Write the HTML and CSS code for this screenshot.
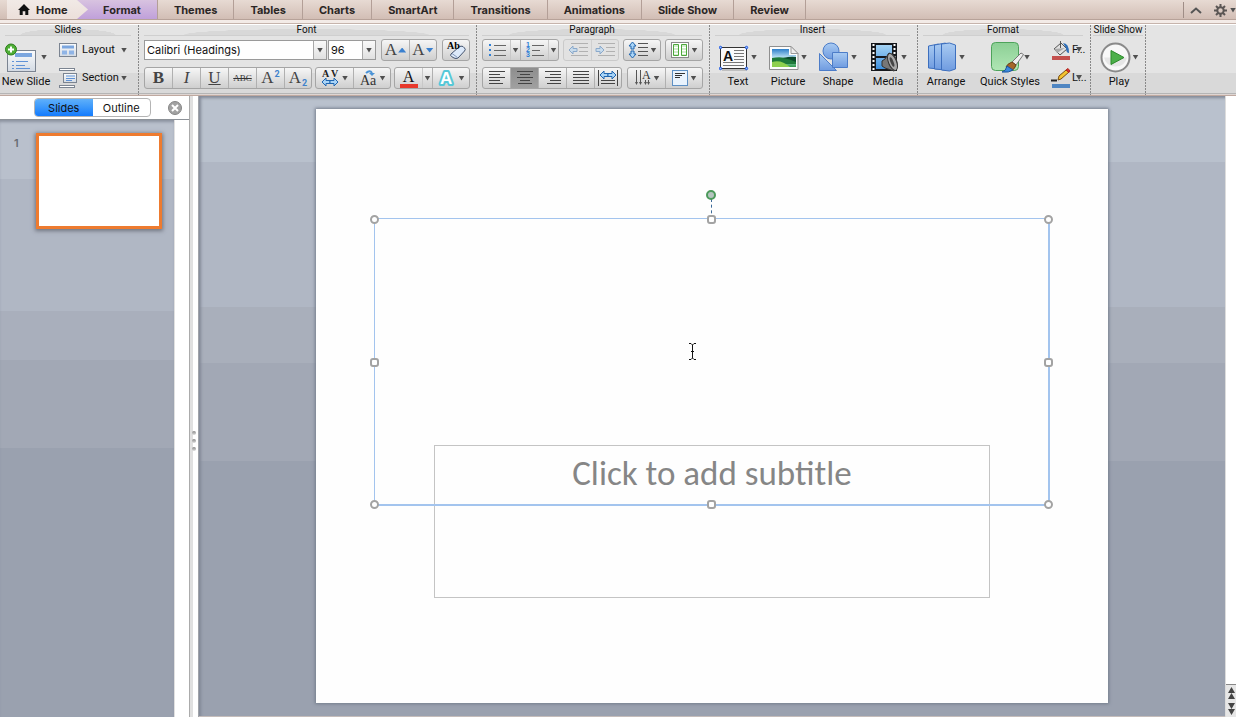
FILE: index.html
```html
<!DOCTYPE html>
<html lang="en">
<head>
<meta charset="utf-8">
<title>Presentation</title>
<link rel="stylesheet" href="styles.css">
</head>
<body>
<svg class="defs" aria-hidden="true">
  <defs>
    <linearGradient id="blue" x1="0" y1="0" x2="0" y2="1"><stop offset="0" stop-color="#a9cbf2"/><stop offset="1" stop-color="#6f9be0"/></linearGradient>
    <linearGradient id="green" x1="0" y1="0" x2="0" y2="1"><stop offset="0" stop-color="#8ccf95"/><stop offset="1" stop-color="#b0e6b4"/></linearGradient>
    <linearGradient id="card" x1="0" y1="0" x2="0" y2="1"><stop offset="0" stop-color="#fbfcfd"/><stop offset="1" stop-color="#d3dae3"/></linearGradient>
    <linearGradient id="sky" x1="0" y1="0" x2="0" y2="1"><stop offset="0" stop-color="#2e7fc9"/><stop offset=".5" stop-color="#c5e8f7"/><stop offset="1" stop-color="#2f9a4a"/></linearGradient>
    <linearGradient id="film" x1="0" y1="0" x2="0" y2="1"><stop offset="0" stop-color="#a5d4f5"/><stop offset="1" stop-color="#3d8fdd"/></linearGradient>
    <g id="arrow-l"><path d="M0 4 4 0v2.500h4v3H4V8z" fill="#a9d4f7" stroke="#2166b0"/></g>
    <g id="arrow-r"><path d="M8 4 4 0v2.500H0v3h4V8z" fill="#a9d4f7" stroke="#2166b0"/></g>
  </defs>
</svg>

<nav class="tabs" aria-label="Ribbon tabs">
  <button class="tab home"><svg width="12" height="11" viewBox="0 0 12 11"><path d="M6 0 12 6h-1.700v5H7.300V7.300H4.700V11H1.700V6H0z" fill="#111"/></svg><span>Home</span></button>
  <button class="tab format">Format</button>
  <button class="tab">Themes</button>
  <button class="tab">Tables</button>
  <button class="tab">Charts</button>
  <button class="tab">SmartArt</button>
  <button class="tab">Transitions</button>
  <button class="tab">Animations</button>
  <button class="tab">Slide Show</button>
  <button class="tab">Review</button>
  <div class="tab-tools">
    <button aria-label="Collapse ribbon"><svg width="12" height="7" viewBox="0 0 12 7"><path d="M1 6 6 1.500 11 6" fill="none" stroke="#555" stroke-width="2"/></svg></button>
    <button class="gear" aria-label="Ribbon settings"><svg width="13" height="13" viewBox="0 0 13 13"><g stroke="#5b5654" fill="none"><circle cx="6.500" cy="6.500" r="3.200" stroke-width="2"/><path d="M6.500 0v3M6.500 10v3M0 6.500h3M10 6.500h3M2 2l2 2M9 9l2 2M11 2 9 4M4 9l-2 2" stroke-width="2"/></g></svg><i class="caret"></i></button>
  </div>
</nav>

<header class="ribbon">
  <section class="group g-slides">
    <h2>Slides</h2>
    <div class="tools">
      <button class="big new">
        <span class="pic"><svg width="32" height="31" viewBox="2 0 32 31"><rect x="4.500" y="8.500" width="28" height="21" fill="url(#card)" stroke="#7b8491"/><path d="M12 13h17" stroke="#7ba6df" stroke-width="4"/><path d="M9 19.500h2M9 23.500h2M9 26.500h2M13 19.500h12M13 23.500h9M13 26.500h14" stroke="#5f92d6"/><circle cx="8" cy="7.500" r="5.500" fill="#4fae36" stroke="#2c7d1c"/><path d="M8 4.500v6M5 7.500h6" stroke="#fff" stroke-width="2"/></svg><i class="caret"></i></span>
        <span>New Slide</span>
      </button>
      <div class="stack">
        <button class="mini"><svg width="18" height="16" viewBox="0 0 18 16"><rect x=".5" y="1.500" width="17" height="13" fill="url(#card)" stroke="#7b8491"/><path d="M3 5h12" stroke="#7ba6df" stroke-width="3"/><path d="M3 10.500h5M10 10.500h5" stroke="#8fb4e6" stroke-width="4"/></svg><span>Layout</span><i class="caret"></i></button>
        <button class="mini"><svg width="18" height="20" viewBox="0 0 18 20"><rect x=".5" y=".5" width="15" height="2" fill="#fff" stroke="#7b8491"/><rect x=".5" y="17.500" width="15" height="2" fill="#fff" stroke="#7b8491"/><rect x="4.500" y="5.500" width="13" height="9" fill="url(#card)" stroke="#7b8491"/><path d="M7 8h9M7 10.500h9M7 12.500h6" stroke="#5f92d6"/></svg><span>Section</span><i class="caret"></i></button>
      </div>
    </div>
  </section>

  <section class="group g-font">
    <h2>Font</h2>
    <div class="rows">
      <div class="row">
        <div class="combos">
          <div class="combo family"><select aria-label="Font family"><option>Calibri (Headings)</option></select><i class="drop"><i class="caret"></i></i></div>
          <div class="combo size"><select aria-label="Font size"><option>96</option></select><i class="drop"><i class="caret"></i></i></div>
        </div>
        <div class="seg">
          <button aria-label="Grow font"><span class="serif">A</span><i class="tri up"></i></button>
          <button aria-label="Shrink font"><span class="serif">A</span><i class="tri down"></i></button>
        </div>
        <div class="seg">
          <button aria-label="Clear formatting"><svg width="22" height="20" viewBox="0 0 22 20"><path d="m6 14 8-7q2-1.500 4-.5l1.500 1.500q1.500 1.500 0 3L13 18q-2 1-4 0l-2.500-1.500q-1.500-1-.5-2.500z" fill="#dce9fa" stroke="#43536e"/><path d="m7 13.500 5.500 4" stroke="#7f96ba"/><text x="2" y="9" class="t-ab">Ab</text></svg></button>
        </div>
      </div>
      <div class="row">
        <div class="seg">
          <button aria-label="Bold"><b class="serif">B</b></button>
          <button aria-label="Italic"><em class="serif">I</em></button>
          <button aria-label="Underline"><u class="serif">U</u></button>
          <button aria-label="Strikethrough"><s>ABC</s></button>
          <button aria-label="Superscript"><span class="serif">A</span><sup>2</sup></button>
          <button aria-label="Subscript"><span class="serif">A</span><sub>2</sub></button>
        </div>
        <div class="seg">
          <button class="wide" aria-label="Character spacing"><svg width="18" height="18" viewBox="0 0 18 18"><text x="1" y="8" class="t-av">A</text><text x="10" y="8" class="t-av">V</text><use href="#arrow-l" x="1" y="9"/><use href="#arrow-r" x="9" y="9"/></svg><i class="caret"></i></button>
          <button class="wide" aria-label="Change case"><svg width="18" height="18" viewBox="0 0 18 18"><text x="1" y="16" class="t-aa">Aa</text><path d="M7 4q4-3.500 6 0" fill="none" stroke="#4b93d6" stroke-width="2"/><path d="M10 4h6l-3 3z" fill="#4b93d6"/></svg><i class="caret"></i></button>
        </div>
        <div class="seg">
          <button class="ink" aria-label="Font color"><span>A</span><i class="bar"></i></button>
          <button class="slim" aria-label="Font color options"><i class="caret"></i></button>
          <button class="wide" aria-label="Text effects"><svg width="18" height="18" viewBox="0 0 18 18"><text x="2" y="15" class="t-fx">A</text></svg><i class="caret"></i></button>
        </div>
      </div>
    </div>
  </section>

  <section class="group g-para">
    <h2>Paragraph</h2>
    <div class="rows">
      <div class="row">
        <div class="seg">
          <button aria-label="Bulleted list"><svg width="18" height="16" viewBox="0 0 18 16"><path d="M1 3h2M1 8h2M1 13h2" stroke="#2f7fd6" stroke-width="2"/><path d="M6 3.500h12M6 8.500h12M6 13.500h12" stroke="#666"/></svg></button>
          <button class="slim" aria-label="Bullet options"><i class="caret"></i></button>
          <button aria-label="Numbered list"><svg width="18" height="16" viewBox="0 0 18 16"><text x="0" y="5" class="t-n">1</text><text x="0" y="10" class="t-n">2</text><text x="0" y="15" class="t-n">3</text><path d="M6 3.500h12M6 8.500h8M6 13.500h12" stroke="#666"/></svg></button>
          <button class="slim" aria-label="Numbering options"><i class="caret"></i></button>
        </div>
        <div class="seg off">
          <button disabled aria-label="Decrease indent"><svg width="20" height="14" viewBox="0 0 20 14"><path d="M3 .5h17M11 4.500h9M11 8.500h9M3 12.500h17" stroke="#777"/><use href="#arrow-l" x="1" y="3"/></svg></button>
          <button disabled aria-label="Increase indent"><svg width="20" height="14" viewBox="0 0 20 14"><path d="M3 .5h17M11 4.500h9M11 8.500h9M3 12.500h17" stroke="#777"/><use href="#arrow-r" x="1" y="3"/></svg></button>
        </div>
        <div class="seg">
          <button class="wide" aria-label="Line spacing"><svg width="20" height="18" viewBox="0 0 20 18"><path d="M4.500 1 8 5H6v3H3V5H1zM4.500 17 8 13H6v-3H3v3H1z" fill="#a9d4f7" stroke="#2166b0"/><path d="M10 2.500h10M10 6.500h10M10 10.500h10M10 14.500h10" stroke="#555"/></svg><i class="caret"></i></button>
        </div>
        <div class="seg">
          <button class="wide" aria-label="Columns"><svg width="18" height="16" viewBox="0 0 18 16"><rect x=".5" y=".5" width="17" height="15" fill="#fff" stroke="#888"/><path d="M2.500 2.500h5v11h-5zM10.500 2.500h5v11h-5z" fill="#d2eccd" stroke="#4da63b"/><path d="M3 5.500h4M3 8.500h4M3 11.500h4M11 5.500h4M11 8.500h4M11 11.500h4" stroke="#fff"/></svg><i class="caret"></i></button>
        </div>
      </div>
      <div class="row">
        <div class="seg">
          <button aria-label="Align left"><svg width="16" height="14" viewBox="0 0 16 14"><path d="M0 .5h16M0 3.500h11M0 6.500h16M0 9.500h11M0 12.500h14" stroke="#444"/></svg></button>
          <button class="on" aria-label="Align center" aria-pressed="true"><svg width="16" height="14" viewBox="0 0 16 14"><path d="M0 .5h16M3 3.500h10M0 6.500h16M3 9.500h10M1 12.500h14" stroke="#444"/></svg></button>
          <button aria-label="Align right"><svg width="16" height="14" viewBox="0 0 16 14"><path d="M0 .5h16M5 3.500h11M0 6.500h16M5 9.500h11M2 12.500h14" stroke="#444"/></svg></button>
          <button aria-label="Justify"><svg width="16" height="14" viewBox="0 0 16 14"><path d="M0 .5h16M0 3.500h16M0 6.500h16M0 9.500h16M0 12.500h16" stroke="#444"/></svg></button>
          <button aria-label="Distribute text"><svg width="20" height="16" viewBox="0 0 20 16"><path d="M.5 0v16M19.500 0v16M3 10.500h14M3 13.500h14" stroke="#444"/><use href="#arrow-l" x="2" y="1"/><use href="#arrow-r" x="10" y="1"/></svg></button>
        </div>
        <div class="seg">
          <button class="wide" aria-label="Text direction"><svg width="17" height="18" viewBox="0 0 17 18"><path d="M2.500 1v12M6.500 1v12M11.500 11v2M14.500 11v2" stroke="#555"/><text x="8" y="10" class="t-dir">A</text><path d="M1 13h3l-1.500 3zM5 13h3l-1.500 3zM10 13h3l-1.500 3zM13 13h3l-1.500 3z" fill="#555"/></svg><i class="caret"></i></button>
          <button class="wide" aria-label="Align text"><svg width="16" height="16" viewBox="0 0 16 16"><rect x=".5" y=".5" width="15" height="15" fill="#e9f3fd" stroke="#5e90c4"/><path d="M3 3.500h10M3 5.500h7M3 7.500h5" stroke="#333"/></svg><i class="caret"></i></button>
        </div>
      </div>
    </div>
  </section>

  <section class="group g-insert">
    <h2>Insert</h2>
    <div class="tools">
      <button class="big"><span class="pic"><svg width="30" height="30" viewBox="0 0 30 30"><rect x="1.500" y="5.500" width="26" height="21" fill="#fafafa" stroke="#333"/><path d="M3 28h25" stroke="#999"/><text x="4" y="19" class="t-box">A</text><path d="M15 8.500h10M15 11.500h10M15 14.500h10M15 17.500h10M4 20.500h21M4 23.500h21" stroke="#777"/><g fill="#9cc2ff" stroke="#1550e0"><circle cx="1.500" cy="5.500" r="1.200"/><circle cx="27.500" cy="5.500" r="1.200"/><circle cx="1.500" cy="26.500" r="1.200"/><circle cx="27.500" cy="26.500" r="1.200"/></g></svg><i class="caret"></i></span><span>Text</span></button>
      <button class="big"><span class="pic"><svg width="30" height="30" viewBox="0 0 30 30"><path d="M.5 4.500H22l7 7v16H.5z" fill="#fdfdfd" stroke="#8f8f8f"/><path d="M3 7h17v6h7v12H3z" fill="url(#sky)"/><path d="M3 16q10-2 24 2v4H3z" fill="#1f7a3a"/><path d="M14 16q8-2 13-1v5q-6-3-13-4z" fill="#0d4a2c"/><path d="M3 20q9-3 18 5H3z" fill="#8fd04e"/><path d="M22 4.500v7h7z" fill="#eee" stroke="#999"/></svg><i class="caret"></i></span><span>Picture</span></button>
      <button class="big"><span class="pic"><svg width="30" height="30" viewBox="0 0 30 30"><g fill="url(#blue)" stroke="#4c7cc8"><circle cx="12" cy="9" r="8"/><path d="M.5 11.500v17h17z"/><path d="M13.500 10.500h15v15h-15z"/></g></svg><i class="caret"></i></span><span>Shape</span></button>
      <button class="big"><span class="pic"><svg width="30" height="30" viewBox="0 0 30 30"><path d="M2 1h26v28H2z" fill="#15181c"/><path d="M7 3h16v11H7zM7 16h16v11H7z" fill="url(#film)"/><path d="M4.500 2v26M25.500 2v26" stroke="#fff" stroke-width="2" stroke-dasharray="2"/><path d="m13 19 3-2 4-6q7 2 8 9t-3 9l-9-3-3-2z" fill="#777" stroke="#333"/><ellipse cx="23.500" cy="20" rx="4" ry="9" transform="rotate(-22 23.500 20)" fill="#a8a8a8" stroke="#333"/><ellipse cx="23" cy="20" rx="1.500" ry="5" transform="rotate(-22 23 20)" fill="#444"/></svg><i class="caret"></i></span><span>Media</span></button>
    </div>
  </section>

  <section class="group g-format">
    <h2>Format</h2>
    <div class="tools">
      <button class="big arrange"><span class="pic"><svg width="30" height="30" viewBox="0 0 30 30"><g fill="url(#blue)" stroke="#3d6fbe"><path d="m1.500 4 10-2v25l-10-1z"/><path d="m7.500 3 11-2v27l-11-1z"/><path d="m14.500 2 8-1 6 2v24l-6 2-8-1z"/></g></svg><i class="caret"></i></span><span>Arrange</span></button>
      <button class="big styles"><span class="pic"><svg width="34" height="32" viewBox="0 0 34 32"><rect x="1.500" y="1.500" width="27" height="28" rx="4" fill="url(#green)" stroke="#4ea35b"/><path d="m31 12 2.500 1.500L26 24l-4-3z" fill="#eee" stroke="#777"/><path d="m26 24-4-3q-5 2-6 5l5 4q4-2 5-6z" fill="#a5672a" stroke="#6c3f14"/><path d="M17 25q-1 5-5 6 7 1 11-2z" fill="#3b8ade" stroke="#1c559c"/></svg><i class="caret"></i></span><span>Quick Styles</span></button>
      <div class="stack">
        <button class="mini" aria-label="Fill"><svg width="20" height="20" viewBox="0 0 20 20"><path d="m3 9 7-6 6 6-7 6z" fill="#e2e2e2" stroke="#555"/><path d="m3 9 3 4 8-5" fill="#aaa"/><path d="M9.500 1v7" stroke="#555"/><path d="M12 3q6 0 6 10-3 0-3-5z" fill="#2f6fb8"/><path d="M1 18h18" stroke="#c4504e" stroke-width="4"/></svg><span>F...</span><i class="caret"></i></button>
        <button class="mini" aria-label="Line"><svg width="20" height="20" viewBox="0 0 20 20"><path d="M0 12.500h6" stroke="#222" stroke-width="2"/><path d="m7 12 1-4 7-6 3 2-8 7z" fill="#f4c32f" stroke="#7a4d10"/><path d="m15 2 2-1.500L19 3l-1 1.500z" fill="#d8362f" stroke="#b3261f"/><path d="M1 18h18" stroke="#4f86c2" stroke-width="4"/></svg><span>L...</span><i class="caret"></i></button>
      </div>
    </div>
  </section>

  <section class="group g-show">
    <h2>Slide Show</h2>
    <div class="tools">
      <button class="big"><span class="pic"><svg width="31" height="31" viewBox="0 0 31 31"><circle cx="15.500" cy="15.500" r="14" fill="#f8f8f8" stroke="#8a8a8a" stroke-width="2"/><path d="M4 15.500h23q-2 9-11.500 9T4 15.500z" fill="#e6e6e6"/><path d="M11 8.500v14l13-7z" fill="#4cb04a" stroke="#2b8a2a"/></svg><i class="caret"></i></span><span>Play</span></button>
    </div>
  </section>
</header>

<main class="work">
  <aside class="panel">
    <div class="panel-head">
      <div class="switch"><button class="active">Slides</button><button>Outline</button></div>
      <button class="close" aria-label="Close panel"><svg width="14" height="14" viewBox="0 0 14 14"><circle cx="7" cy="7" r="6.500" fill="#a2a2a2" stroke="#868686"/><path d="m4 4 6 6M10 4l-6 6" stroke="#fff" stroke-width="2"/></svg></button>
    </div>
    <div class="panel-body">
      <div class="thumbs"><span>1</span><button class="thumb" aria-label="Slide 1"></button></div>
      <div class="track"></div>
    </div>
  </aside>
  <div class="splitter"><i></i><i></i><i></i></div>
  <div class="canvas">
    <article class="slide">
      <div class="subtitle"><p>Click to add subtitle</p></div>
      <div class="title">
        <i class="stem"></i><i class="spin"></i>
        <i class="h r nw"></i><i class="h n"></i><i class="h r ne"></i>
        <i class="h w"></i><i class="h e"></i>
        <i class="h r sw"></i><i class="h s"></i><i class="h r se"></i>
        <svg class="cursor" width="9" height="19" viewBox="0 0 9 19"><path d="M1 1.500h2l1.500 1.500L6 1.500h2M4.500 3v13M3 9.500h3M1 17.500h2L4.500 16 6 17.500h2" fill="none" stroke="#111"/></svg>
      </div>
    </article>
  </div>
  <div class="scroll">
    <button aria-label="Previous slide"><svg width="7" height="12" viewBox="0 0 7 12"><path d="m3.500 0 3.500 6H0zM3.500 6 7 12H0z" fill="#444"/></svg></button>
    <button aria-label="Next slide"><svg width="7" height="12" viewBox="0 0 7 12"><path d="M3.500 6 7 0H0zM3.500 12 7 6H0z" fill="#444"/></svg></button>
  </div>
</main>
</body>
</html>
```

FILE: styles.css
```css
* { box-sizing: border-box; }

body {
  margin: 0;
  height: 100vh;
  display: flex;
  flex-direction: column;
  overflow: hidden;
  background: #fff;
  color: #111;
  font: 11px/14px Inter, "Liberation Sans", sans-serif;
}

button {
  margin: 0;
  padding: 0;
  border: 0;
  background: none;
  color: inherit;
  font: inherit;
}

svg { display: block; flex: none; }
.defs { position: absolute; width: 0; height: 0; }

.caret {
  flex: none;
  width: 6px;
  height: 5px;
  background: #505050;
  clip-path: polygon(0 0, 100% 0, 50% 100%);
}

/* Tab strip */
.tabs {
  flex: none;
  display: flex;
  height: 20px;
  padding-left: 7px;
  background: linear-gradient(#e7dad3, #d2beb5);
  border-bottom: 1px solid #b7a299;
}
.tab {
  padding: 0 16px;
  border-right: 1px solid #b39f97;
  font-weight: 700;
  color: #2b2625;
  white-space: nowrap;
}
.home {
  z-index: 1;
  display: flex;
  align-items: center;
  gap: 6px;
  width: 81px;
  margin-right: -11px;
  padding: 0 0 0 11px;
  border: 0;
  background: linear-gradient(#f1eae6, #ecdfda);
  clip-path: polygon(0 0, 70px 0, 100% 50%, 70px 100%, 0 100%);
}
.format {
  padding: 0 16px 0 26px;
  background: linear-gradient(#d8c3e0, #c0a0da);
}
.tab-tools {
  display: flex;
  align-items: center;
  gap: 12px;
  height: 16px;
  margin: 2px 0 0 auto;
  padding-left: 6px;
  border-left: 1px solid #9f8d86;
}
.gear { display: flex; align-items: center; gap: 3px; }

/* Ribbon */
.ribbon {
  flex: none;
  display: flex;
  height: 76px;
  padding-top: 2px;
  border-top: 3px solid #f3ebe7;
  border-bottom: 1px solid #bfa9a0;
  background: linear-gradient(#c6b4ac 0 1px, #fff 1px 2px, #e4e4e4 2px 50px, #d9d9d9 50px 70px, #b5b5b5 70px 71px, #ded5d2 71px);
  font-family: Roboto, "Liberation Sans", sans-serif;
}
.group {
  flex: none;
  display: flex;
  flex-direction: column;
  padding-bottom: 4px;
  background: radial-gradient(circle, #888 0 1px, transparent 1px) right top / 1px 3px repeat-y;
}
.group h2 {
  margin: 0 8px 3px 5px;
  height: 11px;
  border-bottom: 1px solid #cfcfcf;
  font-size: 10px;
  font-weight: 400;
  line-height: 10px;
  text-align: center;
  white-space: nowrap;
  background: radial-gradient(ellipse 38% 6px at 50% 100%, #d8d8d8 98%, transparent);
}
.g-slides { width: 139px; }
.g-font { width: 338px; }
.g-para { width: 233px; }
.g-insert { width: 208px; }
.g-format { width: 173px; }
.g-show { width: 55px; }
.group.g-show h2 { margin: 0 3px 3px 2px; }

.tools { display: flex; padding: 0 3px; }
.big {
  flex: none;
  width: 50px;
  display: flex;
  flex-direction: column;
  align-items: center;
  white-space: nowrap;
}
.pic { display: flex; align-items: center; justify-content: center; gap: 2px; height: 36px; }
.g-slides .tools { padding: 0; }
.new { width: 52px; }
.new .pic { gap: 4px; }
.arrange { width: 50px; }
.styles { width: 78px; }
.styles .pic { gap: 0; }

.stack { flex: 1; display: grid; grid-template-rows: 22px 22px; row-gap: 6px; padding-left: 7px; }
.mini { position: relative; display: flex; align-items: center; gap: 5px; text-align: left; }
.mini span { width: 34px; white-space: nowrap; }
.g-format .stack { padding-left: 2px; }
.g-format .mini { gap: 1px; }
.g-format .mini span { width: 14px; }
.g-format .mini .caret { position: absolute; left: 25px; top: 8px; }

.rows { display: grid; grid-template-rows: 22px 22px; row-gap: 6px; padding: 0 7px 0 5px; }
.row { display: flex; justify-content: space-between; align-items: center; }

.combos { display: flex; gap: 1px; }
.combo { position: relative; height: 20px; }
.family { width: 183px; }
.size { width: 48px; }
.combo select {
  appearance: none;
  width: 100%;
  height: 100%;
  padding: 0 14px 0 2px;
  border: 1px solid #9a9a9a;
  border-radius: 0;
  background: #fff;
  color: #111;
  font: 11px/14px Inter, "Liberation Sans", sans-serif;
}
.drop {
  position: absolute;
  inset: 1px 1px 1px auto;
  width: 13px;
  display: grid;
  place-items: center;
  border-left: 1px solid #a8a8a8;
  background: linear-gradient(#fafafa, #e0e0e0);
  pointer-events: none;
}

.seg {
  display: flex;
  height: 22px;
  border: 1px solid #a5a5a5;
  border-radius: 3px;
  background: linear-gradient(#f6f6f6, #e2e2e2 50%, #cfcfcf);
}
.seg button {
  width: 28px;
  display: flex;
  align-items: center;
  justify-content: center;
  gap: 1px;
  border-left: 1px solid #b0b0b0;
}
.seg button:first-child { width: 27px; border-left: 0; }
.seg button:last-child { width: 27px; }
.seg button:only-child { width: 26px; }
.seg .wide, .seg .wide:first-child, .seg .wide:last-child { width: 37px; gap: 3px; }
.seg .wide:only-child { width: 36px; }
.seg .slim, .seg .slim:last-child { width: 10px; border-left-color: #c8c8c8; }
.seg .on { background: linear-gradient(#8e8e8e, #a0a0a0); }
.seg .ink { flex-direction: column; gap: 0; font: 16px/15px "Liberation Serif", serif; }
.bar { width: 18px; height: 4px; background: #e8392c; }
.seg.off { border-color: #cacaca; background: #e2e2e2; }
.seg.off button { border-color: #cfcfcf; }
.seg.off svg { opacity: .45; }

.serif { font-family: "Liberation Serif", serif; font-size: 17px; line-height: 20px; color: #444; }
.seg s { font: 9px/20px "Liberation Serif", serif; color: #333; }
.seg sup, .seg sub { font-size: 9px; font-weight: 700; line-height: 10px; color: #3e82cc; vertical-align: baseline; }
.seg sup { align-self: flex-start; padding-top: 1px; }
.seg sub { align-self: flex-end; }
.tri { width: 8px; height: 5px; background: #3a80cf; }
.up { clip-path: polygon(50% 0, 100% 100%, 0 100%); }
.down { clip-path: polygon(0 0, 100% 0, 50% 100%); }

.t-ab { font: 700 10px "Liberation Serif", serif; }
.t-av { font: 700 10px "Liberation Serif", serif; fill: #222; }
.t-aa { font: 14px "Liberation Serif", serif; fill: #333; }
.t-fx { font: 700 17px "Liberation Sans", sans-serif; fill: #fff; stroke: #55c8d8; stroke-width: 4px; paint-order: stroke; stroke-linejoin: round; }
.t-n { font: 700 7px "Liberation Sans", sans-serif; fill: #2f7fd6; }
.t-dir { font: 12px "Liberation Serif", serif; fill: #333; }
.t-box { font: 700 14px "Liberation Sans", sans-serif; fill: #111; }

/* Work area */
.work { flex: 1; display: flex; min-height: 0; }
.panel { flex: none; width: 189px; display: flex; flex-direction: column; }
.panel-head {
  display: flex;
  align-items: center;
  justify-content: space-between;
  height: 24px;
  padding: 0 7px 0 34px;
  border-bottom: 1px solid #8d9298;
}
.switch { display: grid; grid-template-columns: 1fr 1fr; width: 117px; height: 19px; border: 1px solid #b4b4b4; border-radius: 4px; overflow: hidden; }
.switch .active { background: linear-gradient(#5fb0fa, #3a97fb 50%, #147bfd); }
.panel-body { flex: 1; display: flex; }
.thumbs {
  flex: 1;
  display: flex;
  align-items: flex-start;
  justify-content: space-between;
  padding: 13px 12px 0 14px;
  background: linear-gradient(#b9c0cc 0 9.9%, #b0b7c4 9.9% 32%, #a9afbc 32% 40.2%, #a2a8b5 40.2% 54.9%, #9aa1af 54.9%);
  box-shadow: inset 0 3px 3px -1px #8b919f;
}
.thumbs span { padding-top: 3px; font-weight: 600; color: #666b73; }
.thumb { width: 126px; aspect-ratio: 21 / 16; border: 3px solid #ee7b2f; background: #fff; box-shadow: 0 1px 4px 1px #707580; }
.track { width: 15px; border-left: 1px solid #e0e0e0; background: #fff; }
.splitter {
  flex: none;
  width: 10px;
  display: flex;
  flex-direction: column;
  align-items: center;
  justify-content: center;
  gap: 4px;
  padding-top: 68px;
  background: linear-gradient(90deg, #ababab 0 1px, #e0e0e0 1px 4px, #fff 4px 9px, #a0a3a9 9px);
}
.splitter i { width: 4px; height: 4px; border-radius: 50%; background: linear-gradient(#888, #ddd); }

.canvas {
  flex: 1;
  display: flex;
  justify-content: center;
  min-width: 0;
  padding: 13px 0;
  border-bottom: 1px solid #c5bdbb;
  background: linear-gradient(#b9c1cd 0 10.6%, #b0b7c4 10.6% 34.1%, #a9afbb 34.1% 43%, #a2a8b5 43% 58.8%, #9aa1af 58.8%);
  box-shadow: inset 3px 3px 3px -1px #828997;
}
.slide { position: relative; height: 100%; aspect-ratio: 4 / 3; background: #fefefe; box-shadow: 0 0 3px 1px #747d8c; }
.title { position: absolute; left: 7.3%; top: 18.4%; width: 85.4%; height: 48.5%; border: 1px solid #a3c4ee; border-width: 1px 2px 2px 1px; }
.subtitle { position: absolute; left: 14.9%; top: 56.6%; width: 70.2%; height: 25.8%; border: 1px solid #c4c4c4; }
.subtitle p { margin: 6px 0 0; color: #868686; font: 35px/42px Carlito, Lato, sans-serif; text-align: center; white-space: nowrap; }

/* Resize handles */
.h { position: absolute; width: 9px; height: 9px; margin: -4px; border: 2px solid #a3a3a3; border-radius: 3px; background: #fff; }
.r { border-radius: 50%; }
.nw, .w, .sw { left: 0; margin-left: -5px; }
.ne, .e, .se { left: 100%; }
.n, .s { left: 50%; }
.nw, .n, .ne { top: 0; }
.w, .e { top: 50%; }
.sw, .s, .se { top: 100%; }
.stem { position: absolute; left: 50%; bottom: 100%; height: 20px; border-left: 1px dashed #3c6a98; }
.spin { position: absolute; left: 50%; bottom: 100%; width: 10px; height: 10px; margin: 0 -5px 19px; border: 2px solid #4c9a5b; border-radius: 50%; background: #b5c4bf; }
.cursor { position: absolute; left: 46.5%; top: 43%; }

.scroll {
  flex: none;
  width: 11px;
  display: flex;
  flex-direction: column;
  justify-content: flex-end;
  border-left: 1px solid #dcdcdc;
  background: #fff;
}
.scroll button { height: 16px; display: grid; place-items: center; background: #e6e6e6; }
.scroll button:first-of-type { height: 17px; border-top: 1px solid #888; }
```
